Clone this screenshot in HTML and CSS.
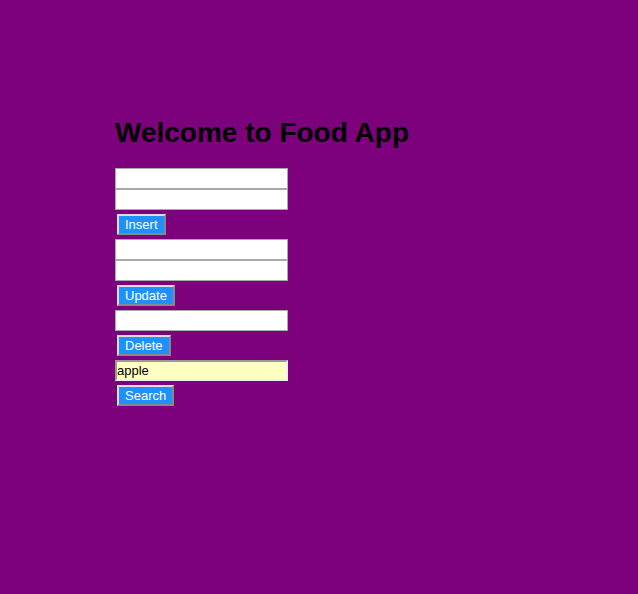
FILE: index.html
```html
<!DOCTYPE html>
<html lang="en">
<head>
<meta charset="utf-8">
<title>Food App</title>
<link rel="stylesheet" href="styles.css">
</head>
<body>
<main>
<h1>Welcome to Food App</h1>
<form>
<input type="text" aria-label="Name">
<input type="text" aria-label="Calories">
<button type="button">Insert</button>
</form>
<form>
<input type="text" aria-label="Current name">
<input type="text" aria-label="New name">
<button type="button">Update</button>
</form>
<form>
<input type="text" aria-label="Name to delete">
<button type="button">Delete</button>
</form>
<form>
<input class="filled" type="text" aria-label="Name to search" value="apple">
<button type="button">Search</button>
</form>
</main>
</body>
</html>
```
FILE: styles.css
```css
body {
  margin: 0;
  background: #7d007d;
  color: #000;
  font-family: "Liberation Sans", Arial, sans-serif;
}

main {
  padding: 117px 0 0 115px;
}

h1 {
  margin: 0 0 19px;
  font-size: 28px;
  line-height: 32px;
}

form {
  display: flex;
  flex-direction: column;
  align-items: flex-start;
}

input {
  box-sizing: border-box;
  width: 173px;
  height: 21px;
  padding: 1px 0;
  border: 1px solid #a9a9a9;
  border-radius: 0;
  background: #fff;
  color: #000;
  font: 13px "Liberation Sans", Arial, sans-serif;
}

.filled {
  padding: 0;
  border-width: 2px;
  border-color: #9a9a9a #eee #eee #9a9a9a;
  background: #ffffc0;
}

button {
  box-sizing: border-box;
  height: 21px;
  margin: 4px 2px;
  padding: 0 6px;
  border: 2px solid;
  border-color: #ddd #888 #888 #ddd;
  border-radius: 0;
  background: #1e90ff;
  color: #fff;
  font: 13px/17px "Liberation Sans", Arial, sans-serif;
}
```
